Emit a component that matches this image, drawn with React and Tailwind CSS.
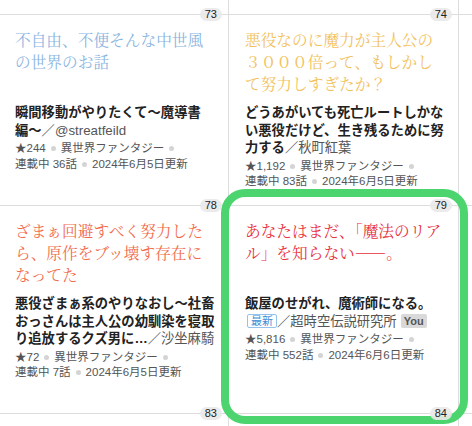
const cells = [
  {
    no: 73,
    title: '不自由、不便そんな中世風の世界のお話',
    color: 'text-[#8cb6df]',
    book: '瞬間移動がやりたくて〜魔導書編〜',
    author: '／@streatfeild',
    stars: '244',
    status: '連載中 36話',
    date: '2024年6月5日更新',
  },
  {
    no: 74,
    title: '悪役なのに魔力が主人公の３０００倍って、もしかして努力しすぎたか？',
    color: 'text-[#f2c15c]',
    book: 'どうあがいても死亡ルートしかない悪役だけど、生き残るために努力する',
    author: '／秋町紅葉',
    stars: '1,192',
    status: '連載中 83話',
    date: '2024年6月5日更新',
  },
  {
    no: 78,
    title: 'ざまぁ回避すべく努力したら、原作をブッ壊す存在になってた',
    color: 'text-[#f26c4c]',
    book: '悪役ざまぁ系のやりなおし〜社畜おっさんは主人公の幼馴染を寝取り追放するクズ男に…',
    author: '／沙坐麻騎',
    stars: '72',
    status: '連載中 7話',
    date: '2024年6月5日更新',
  },
  {
    no: 79,
    title: 'あなたはまだ、「魔法のリアル」を知らない――。',
    color: 'text-[#e8303c]',
    book: '飯屋のせがれ、魔術師になる。',
    author: '／超時空伝説研究所',
    mine: true,
    stars: '5,816',
    status: '連載中 552話',
    date: '2024年6月6日更新',
  },
];

function Badge({ no }) {
  return (
    <span className="absolute -top-[7px] right-[6px] z-20 rounded-full bg-[#e9e9e9]/90 px-[5px] text-[11px] leading-[13px] text-[#222]">
      {no}
    </span>
  );
}

function Meta({ items }) {
  return (
    <div className="mt-[2px] flex flex-wrap text-[11.5px] leading-[15.5px] text-[#555]">
      {items.map((item, i) => (
        <span key={i} className="flex items-center">
          {item}
          {i < items.length - 1 && <span className="mx-[5px] h-[5px] w-[5px] rounded-full bg-[#d4d4d4]" />}
        </span>
      ))}
    </div>
  );
}

function Cell({ c }) {
  return (
    <div className="relative border-t border-r border-[#dddddd] pt-[13px] pl-4 pr-3">
      <Badge no={c.no} />
      <p className={`h-[66px] font-['Noto_Serif_CJK_JP','Noto_Sans_CJK_JP',serif] text-[15.7px] leading-[22px] ${c.color}`}>
        {c.title}
      </p>
      <p className="mt-[10px] text-[13.3px] font-bold leading-[17.5px] text-[#222]">
        {c.book}
        {c.mine && (
          <span className="ml-[2px] inline-block rounded-[2px] border border-[#93c3ec] px-[3px] align-[1px] text-[11px] font-normal leading-[12px] text-[#3d8fd8]">
            最新
          </span>
        )}
        <span className="font-normal text-[#555]">{c.author}</span>
        {c.mine && (
          <span className="ml-[4px] inline-block rounded-[2px] bg-[#d9d9d9] px-[3px] align-[1px] text-[11px] leading-[14px] text-[#555]">
            You
          </span>
        )}
      </p>
      <Meta items={[`★${c.stars}`, '異世界ファンタジー', c.status, c.date]} />
    </div>
  );
}

export default function App() {
  return (
    <div
      lang="ja"
      className="relative h-[426px] w-[472px] overflow-hidden bg-white font-['Liberation_Sans','Noto_Sans_CJK_JP',sans-serif]"
    >
      <div className="-ml-px grid h-full grid-cols-[230px_230px_1fr] grid-rows-[14px_191px_208px_1fr]">
        <div className="border-r border-[#dddddd]" />
        <div className="border-r border-[#dddddd]" />
        <div />

        <Cell c={cells[0]} />
        <Cell c={cells[1]} />
        <div className="border-t border-[#dddddd]" />

        <Cell c={cells[2]} />
        <Cell c={cells[3]} />
        <div className="border-t border-[#dddddd]" />

        <div className="relative border-t border-r border-[#dddddd]">
          <Badge no={83} />
        </div>
        <div className="relative border-t border-r border-[#dddddd]">
          <Badge no={84} />
        </div>
        <div className="border-t border-[#dddddd]" />
      </div>

      {/* highlight ring around the selected work */}
      <div className="pointer-events-none absolute left-[221px] top-[189px] z-10 h-[235px] w-[247px] rounded-[24px] border-[8px] border-[#4cd56f]" />
    </div>
  );
}
